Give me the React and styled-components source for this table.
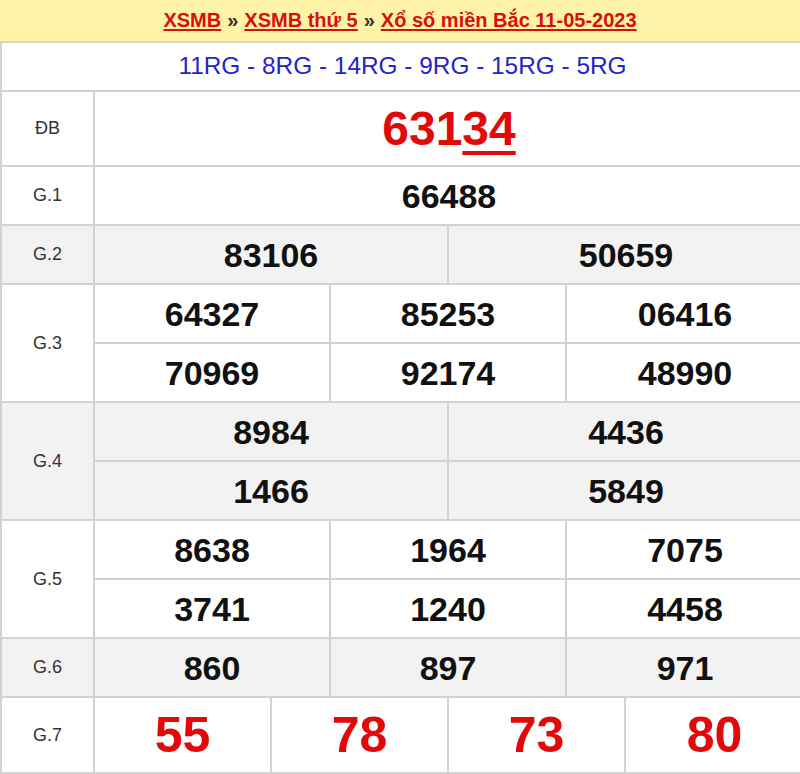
import React from "react";
import styled, { createGlobalStyle } from "styled-components";

const Global = createGlobalStyle`
  html, body { margin: 0; padding: 0; background: #fff; overflow: hidden; }
  body { font-family: "Liberation Sans", Arial, sans-serif; }
`;

const Board = styled.div`
  width: 803px;
  box-sizing: border-box;
  background: #fff;
`;

const Header = styled.div`
  height: 41px;
  background: #fff3a7;
  border-bottom: 2px solid #d9d3c3;
  display: flex;
  align-items: center;
  justify-content: center;
  font-size: 20px;
  font-weight: bold;
  color: #333;
  gap: 6px;
  padding-right: 3px;
`;

const Crumb = styled.a`
  color: #d60f0f;
  text-decoration: underline;
  text-underline-offset: 2px;
`;

const Sep = styled.span`
  color: #333;
`;

const Codes = styled.div`
  height: 45px;
  border-left: 2px solid #d2d2d2;
  border-bottom: 2px solid #d2d2d2;
  display: flex;
  align-items: center;
  justify-content: center;
  font-size: 24.4px;
  color: #2424c8;
  padding-bottom: 2px;
`;

const Row = styled.div`
  display: flex;
  background: ${(p) => (p.$shade ? "#f2f2f2" : "#fff")};
  border-left: 2px solid #d2d2d2;
`;

const Label = styled.div`
  width: 91px;
  flex: none;
  border-right: 2px solid #d2d2d2;
  border-bottom: 2px solid #d2d2d2;
  display: flex;
  align-items: center;
  justify-content: center;
  font-size: 18px;
  color: #333;
`;

const Cells = styled.div`
  flex: 1;
  display: grid;
  grid-template-columns: repeat(${(p) => p.$cols}, 1fr);
`;

const Cell = styled.div`
  height: ${(p) => p.$h}px;
  border-bottom: 2px solid #d2d2d2;
  border-right: ${(p) => (p.$last ? "none" : "2px solid #d2d2d2")};
  display: flex;
  align-items: center;
  justify-content: center;
  font-weight: bold;
  font-size: ${(p) => p.$size || 34}px;
  color: ${(p) => (p.$red ? "#e10a0a" : "#111")};
  line-height: 1;
`;

const Tail = styled.span`
  text-decoration: underline;
  text-decoration-thickness: 4px;
  text-underline-offset: 6px;
`;

const rows = [
  { label: "G.1", cols: 1, h: 57, nums: ["66488"] },
  { label: "G.2", cols: 2, h: 57, shade: true, nums: ["83106", "50659"] },
  { label: "G.3", cols: 3, h: 57, nums: ["64327", "85253", "06416", "70969", "92174", "48990"] },
  { label: "G.4", cols: 2, h: 57, shade: true, nums: ["8984", "4436", "1466", "5849"] },
  { label: "G.5", cols: 3, h: 57, nums: ["8638", "1964", "7075", "3741", "1240", "4458"] },
  { label: "G.6", cols: 3, h: 57, shade: true, nums: ["860", "897", "971"] },
  { label: "G.7", cols: 4, h: 74, red: true, size: 50, nums: ["55", "78", "73", "80"] },
];

export default function App() {
  return (
    <Board>
      <Global />
      <Header>
        <Crumb>XSMB</Crumb>
        <Sep>»</Sep>
        <Crumb>XSMB thứ 5</Crumb>
        <Sep>»</Sep>
        <Crumb>Xổ số miền Bắc 11-05-2023</Crumb>
      </Header>
      <Codes>11RG - 8RG - 14RG - 9RG - 15RG - 5RG</Codes>
      <Row>
        <Label>ĐB</Label>
        <Cells $cols={1}>
          <Cell $h={73} $last $red $size={48}>
            631<Tail>34</Tail>
          </Cell>
        </Cells>
      </Row>
      {rows.map((r) => (
        <Row key={r.label} $shade={r.shade}>
          <Label>{r.label}</Label>
          <Cells $cols={r.cols}>
            {r.nums.map((n, i) => (
              <Cell
                key={i}
                $h={r.h}
                $last={(i + 1) % r.cols === 0}
                $red={r.red}
                $size={r.size}
              >
                {n}
              </Cell>
            ))}
          </Cells>
        </Row>
      ))}
    </Board>
  );
}
